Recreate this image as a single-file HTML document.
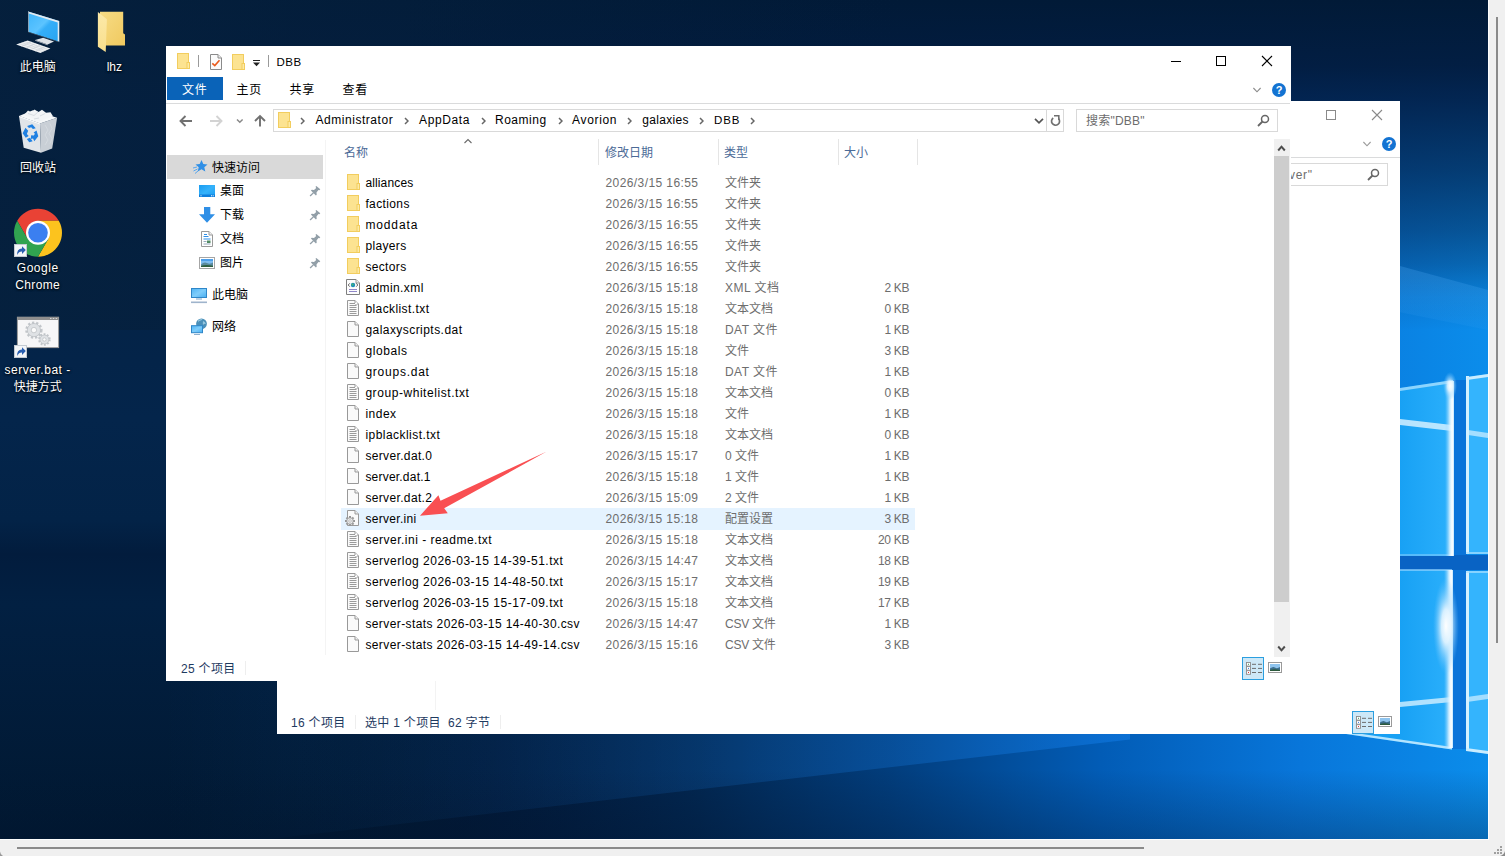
<!DOCTYPE html>
<html lang="zh-CN">
<head>
<meta charset="utf-8">
<title>DBB</title>
<style>
*{box-sizing:border-box;margin:0;padding:0}
html,body{width:1505px;height:856px;overflow:hidden;background:#f0f0f0}
body{font-family:"Liberation Sans","Noto Sans CJK SC",sans-serif;font-size:12px;color:#000;position:relative}
.abs{position:absolute}
#desk{position:absolute;left:0;top:0;width:1488px;height:839px;overflow:hidden;background:#02193a}
#deskedge-r{position:absolute;left:1488px;top:0;width:1px;height:840px;background:#fdfdfd}
#deskedge-b{position:absolute;left:0;top:839px;width:1489px;height:1px;background:#fdfdfd}
.sbv{position:absolute;left:1496px;top:17px;width:2px;height:626px;background:#8a8a8a}
.sbh{position:absolute;left:17px;top:847px;width:1127px;height:2px;background:#8a8a8a}
.dlabel{position:absolute;color:#fff;text-align:center;font-size:12px;line-height:17px;width:90px;text-shadow:0 1px 2px rgba(0,0,0,.9),0 0 3px rgba(0,0,0,.6)}
.win{position:absolute;background:#fff;overflow:hidden}
.t{position:absolute;white-space:nowrap;line-height:16px;height:16px;margin-top:1px}
.row{position:absolute;left:0;height:21px;width:600px}
.g{color:#6d6d6d}
.hd{color:#4b6a97}
</style>
</head>
<body>
<div id="desk">

<svg class="abs" style="left:0;top:0" width="1488" height="839" viewBox="0 0 1488 839">
<defs>
<linearGradient id="wbase" x1="0" y1="0" x2="0" y2="1">
<stop offset="0" stop-color="#041e3c"/><stop offset=".5" stop-color="#04254b"/><stop offset=".62" stop-color="#032347"/><stop offset=".66" stop-color="#021c3d"/><stop offset=".72" stop-color="#022042"/><stop offset="1" stop-color="#011831"/>
</linearGradient>
<linearGradient id="wh" x1="0" y1="0" x2="1488" y2="0" gradientUnits="userSpaceOnUse">
<stop offset="0" stop-color="#02152f" stop-opacity="0"/><stop offset=".2" stop-color="#02152f" stop-opacity="0"/><stop offset=".336" stop-color="#021a3c" stop-opacity=".7"/><stop offset=".47" stop-color="#022751"/><stop offset=".598" stop-color="#023d7c"/><stop offset=".74" stop-color="#025cb6"/><stop offset=".874" stop-color="#0876da"/><stop offset="1" stop-color="#0b8deb"/>
</linearGradient>
<linearGradient id="wtop" x1="0" y1="0" x2="0" y2="330" gradientUnits="userSpaceOnUse">
<stop offset="0" stop-color="#011a37"/><stop offset=".2" stop-color="#021b3e" stop-opacity=".97"/><stop offset=".3" stop-color="#021d45" stop-opacity=".92"/><stop offset=".515" stop-color="#021d45" stop-opacity=".72"/><stop offset=".7" stop-color="#021d45" stop-opacity=".5"/><stop offset=".8" stop-color="#021d45" stop-opacity=".34"/><stop offset=".9" stop-color="#021d45" stop-opacity=".12"/><stop offset="1" stop-color="#021d45" stop-opacity="0"/>
</linearGradient>
<linearGradient id="wtl" x1="0" y1="0" x2="900" y2="0" gradientUnits="userSpaceOnUse"><stop offset="0" stop-color="#05203d" stop-opacity=".9"/><stop offset="1" stop-color="#05203d" stop-opacity="0"/></linearGradient>
<linearGradient id="beam" x1="0" y1="0" x2="-.2" y2="1"><stop offset="0" stop-color="#58b4ff" stop-opacity=".3"/><stop offset="1" stop-color="#58b4ff" stop-opacity="0"/></linearGradient>
<linearGradient id="wedge" x1="160" y1="0" x2="1130" y2="0" gradientUnits="userSpaceOnUse"><stop offset="0" stop-color="#1a8cff" stop-opacity="0"/><stop offset=".35" stop-color="#1a8cff" stop-opacity=".08"/><stop offset=".75" stop-color="#1a8cff" stop-opacity=".22"/><stop offset="1" stop-color="#1a8cff" stop-opacity=".36"/></linearGradient>
<linearGradient id="wbot" x1="0" y1="0" x2="0" y2="1"><stop offset="0" stop-color="#011530" stop-opacity="0"/><stop offset="1" stop-color="#011530" stop-opacity=".3"/></linearGradient>
<linearGradient id="pane" x1="0" y1="0" x2="1" y2="0"><stop offset="0" stop-color="#18a1f4"/><stop offset="1" stop-color="#2bb0fc"/></linearGradient>
<linearGradient id="pane2" x1="1300" y1="0" x2="1452" y2="0" gradientUnits="userSpaceOnUse"><stop offset="0" stop-color="#1299f0"/><stop offset=".66" stop-color="#18a1f4"/><stop offset="1" stop-color="#2bb0fc"/></linearGradient>
<linearGradient id="edge" x1="0" y1="0" x2="1" y2="0"><stop offset="0" stop-color="#8fd4ff" stop-opacity="0"/><stop offset=".55" stop-color="#dff3ff" stop-opacity=".9"/><stop offset=".8" stop-color="#ffffff"/><stop offset="1" stop-color="#bfe6ff"/></linearGradient>
<radialGradient id="glare" cx=".5" cy=".5" r=".5"><stop offset="0" stop-color="#fff"/><stop offset=".35" stop-color="#e8f6ff" stop-opacity=".9"/><stop offset="1" stop-color="#6cc4ff" stop-opacity="0"/></radialGradient>
</defs>
<rect width="1488" height="839" fill="url(#wbase)"/>
<rect width="1488" height="839" fill="url(#wh)"/>
<rect width="1488" height="330" fill="url(#wtop)"/>
<rect width="900" height="330" fill="url(#wtl)"/>
<polygon points="1290,236 1488,290 1488,330 1290,290" fill="url(#beam)"/>
<polygon points="160,839 270,839 1130,739.5 1130,680 160,680" fill="url(#wedge)"/>
<rect x="0" y="770" width="1488" height="69" fill="url(#wbot)"/>
<!-- frame bars -->
<rect x="1452" y="380" width="15" height="369" fill="#0a74d9"/>
<rect x="1400" y="555" width="88" height="15" fill="#0963c4"/>
<!-- panes -->
<polygon points="1400,388 1453,380 1453,556 1400,556" fill="url(#pane)"/>
<polygon points="1300,570 1452,570 1452,749.5 1300,727.3" fill="url(#pane2)"/>
<polygon points="1467,377 1488,374 1488,554 1467,554" fill="#34b4fd"/>
<polygon points="1466,571 1488,571 1488,754 1466,750" fill="#34b4fd"/>
<!-- light beams across panes -->
<polygon points="1400,419 1452,425 1452,431 1400,425" fill="#d4f0ff" opacity=".85"/>
<polygon points="1468,430 1488,433 1488,438 1468,435" fill="#d4f0ff" opacity=".7"/>
<polygon points="1400,702 1452,697 1452,702 1400,707" fill="#d4f0ff" opacity=".8"/>
<polygon points="1467,697 1488,694 1488,699 1467,702" fill="#d4f0ff" opacity=".7"/>
<!-- pane edges -->
<polygon points="1400,388 1453,380 1453,383 1400,391" fill="#a9e0ff" opacity=".8"/>
<polygon points="1300,725 1452,747 1452,749.5 1300,727.3" fill="#b4e4ff"/>
<rect x="1400" y="569" width="52" height="2" fill="#8fd2ff" opacity=".7"/>
<rect x="1400" y="554" width="53" height="2" fill="#8fd2ff" opacity=".5"/>
<rect x="1445" y="381" width="9" height="175" fill="url(#edge)"/>
<rect x="1444" y="570" width="9" height="178" fill="url(#edge)"/>
<rect x="1466" y="376" width="3" height="178" fill="#d6f1ff"/>
<rect x="1466" y="571" width="3" height="180" fill="#d6f1ff"/>
<polygon points="1467,377 1488,374 1488,377 1467,380" fill="#c9ecff"/>
<polygon points="1466,748 1488,751 1488,754 1466,751" fill="#c9ecff"/>
<rect x="1466" y="552" width="22" height="2" fill="#a9e0ff" opacity=".7"/>
<rect x="1466" y="571" width="22" height="2" fill="#a9e0ff" opacity=".7"/>
<ellipse cx="1446" cy="626" rx="13" ry="48" fill="url(#glare)"/>
<ellipse cx="1450" cy="386" rx="7" ry="14" fill="url(#glare)" opacity=".9"/>
</svg>


<!-- This PC -->
<svg class="abs" style="left:10px;top:5px" width="60" height="52" viewBox="10 5 60 52">
<defs><linearGradient id="scr" x1="0" y1="0" x2="1" y2="1"><stop offset="0" stop-color="#3cb4fb"/><stop offset=".45" stop-color="#5cc4ff"/><stop offset=".55" stop-color="#35aef8"/><stop offset="1" stop-color="#28a4f2"/></linearGradient></defs>
<polygon points="35.2,39.9 43.1,37.8 54,41.4 47.6,44.5" fill="#dfe3e8"/>
<polygon points="35.2,39.9 47.6,44.5 47.6,45.3 35.2,40.7" fill="#b4bac2"/>
<polygon points="28.1,11.4 59.2,21.1 59.2,41.7 28.1,31.7" fill="url(#scr)"/>
<polygon points="28.1,11.4 59.2,21.1 59.2,41.7 57.7,41.2 57.7,22.6 28.1,13.3" fill="#e4e9ee"/>
<polygon points="28.1,11.4 28.9,11.6 28.9,32 28.1,31.7" fill="#9aa3ad"/>
<polygon points="28.1,31.7 59.2,41.7 59.2,42.3 28.1,32.3" fill="#55606c"/>
<polygon points="16.1,44.5 27.6,40.5 50.4,48.4 40.4,53" fill="#f0f2f4"/>
<g stroke="#c5cbd2" stroke-width=".6" fill="none"><path d="M18.9 43.5l24.3 8.2M21.8 42.5l23.7 8.1M24.7 41.5l23.2 8"/><path d="M21.5 46.4l9.8-4.6M26 48l9.8-4.6M30.7 49.6l9.6-4.5M35.5 51.3l9.5-4.6"/></g>
</svg>
<div class="dlabel" style="left:-7.3px;top:59px">此电脑</div>
<!-- lhz folder -->
<svg class="abs" style="left:96px;top:10px" width="32" height="44" viewBox="96 10 32 44">
<defs><linearGradient id="fb" x1="0" y1="0" x2="1" y2="1"><stop offset="0" stop-color="#f7dc85"/><stop offset="1" stop-color="#f0c95f"/></linearGradient>
<linearGradient id="ff" x1="0" y1="0" x2="0" y2="1"><stop offset="0" stop-color="#fce9a8"/><stop offset="1" stop-color="#f9df8d"/></linearGradient></defs>
<path d="M100 11.7H123.2V33.3L125 34.5V45.5H100z" fill="url(#fb)"/>
<path d="M97.9 12L106.9 19.3L105.7 52L97.9 46.7z" fill="url(#ff)"/>
</svg>
<div class="dlabel" style="left:69.3px;top:59px">lhz</div>
<!-- Recycle bin -->
<svg class="abs" style="left:15px;top:107px" width="46" height="48" viewBox="15 107 46 48">
<polygon points="19,115.9 40,123.4 41,152.8 23.7,147.7" fill="#e1e5e9"/>
<polygon points="40,123.4 57.1,117.8 52.2,148.6 41,152.8" fill="#c9cfd6"/>
<polygon points="19,115.9 33,110.3 57.1,117.8 40,123.4" fill="#f6f8f9"/>
<path d="M24 115l4-4.5 3.5 2 3-3 4 2.5 3.5-2.2 4 3 4.5-.5 2.5 4-13 5z" fill="#f2f4f6"/>
<path d="M28 113.5l6 2 4-3.5M40 116l5-2.5M34 119l5-1" stroke="#d0d6dc" stroke-width=".8" fill="none"/>
<g fill="none" stroke="#d9dee3" stroke-width=".7"><path d="M45 125l3 5-3 5 3 5-3 5M50 123.5l2 5-3 5 3 5-2 5"/></g>
<polygon points="19,115.9 40,123.4 40.1,124.6 19.1,117.1" fill="#fbfcfd"/>
<g fill="#1f80e2" transform="translate(30.2 133.5) scale(1.350) translate(-29.8 -133)"><path d="M27.5 127.5l3.8-1.3 2.6 3-2.1.4-1.3-1.3-1.6.7z"/><path d="M26.3 128.8l2 2.1-1 2.4 1.4 1.6-2.2 1.3-2.3-3.4z"/><path d="M34.5 130.8l1.3 4.3-3 3.6-.9-2-1.7.3.3-2.7 2 .2 .8-1.4-1-.8z"/><path d="M27.3 137l2.3-.8 2 2.6-2.5.6z"/></g>
</svg>
<div class="dlabel" style="left:-7px;top:160px">回收站</div>
<!-- Chrome -->
<svg class="abs" style="left:12px;top:207px" width="52" height="52" viewBox="0 0 52 52">
<path d="M26.0 25.7L26.00 13.70L46.78 13.70A24.0 24.0 0 0 0 5.22 13.70L15.61 31.70Z" fill="#e94235"/><path d="M26.0 25.7L36.39 31.70L26.00 49.70A24.0 24.0 0 0 0 46.78 13.70L26.00 13.70Z" fill="#fcc31e"/><path d="M26.0 25.7L15.61 31.70L5.22 13.70A24.0 24.0 0 0 0 26.00 49.70L36.39 31.70Z" fill="#31a350"/>
<circle cx="26.0" cy="25.7" r="12" fill="#fff"/><circle cx="26.0" cy="25.7" r="9.8" fill="#3b7ff0"/>
<rect x="2.5" y="37.5" width="12" height="12" fill="#f4f6f8" stroke="#c3cad2" stroke-width="1"/><path d="M5.2 48 q-.6-6.2 4.8-6.4 v-2.4 l3.8 3.9 -3.8 3.9 v-2.4 q-3.2-.1-4.8 3.4z" fill="#2a5fb0"/>
</svg>
<div class="dlabel" style="left:-7.3px;top:260px"><span style="letter-spacing:.52px">Google</span><br><span style="letter-spacing:.38px">Chrome</span></div>
<!-- server.bat -->
<svg class="abs" style="left:12px;top:314px" width="52" height="46" viewBox="12 314 52 46">
<rect x="17.4" y="317.2" width="41.2" height="30.4" fill="#f6f6f7" stroke="#9c9c9c" stroke-width="1"/>
<rect x="17.4" y="317" width="41.2" height="3" fill="#8e8e8e"/>
<g fill="#d8d8d8"><rect x="50" y="318" width="1.5" height="1"/><rect x="52.8" y="318" width="1.5" height="1"/><rect x="55.6" y="318" width="1.5" height="1"/></g>
<g fill="none" stroke="#c2c6ca" stroke-width="2.6" stroke-dasharray="2.2 1.9"><circle cx="33.9" cy="330.1" r="7.4"/></g>
<circle cx="33.9" cy="330.1" r="6.6" fill="#dfe2e5" stroke="#b7bbc0" stroke-width=".7"/><circle cx="33.9" cy="330.1" r="2.7" fill="#fbfbfb" stroke="#b7bbc0" stroke-width=".7"/>
<g fill="none" stroke="#c2c6ca" stroke-width="2.2" stroke-dasharray="1.8 1.5"><circle cx="44.4" cy="339.5" r="5.2"/></g>
<circle cx="44.4" cy="339.5" r="4.5" fill="#dfe2e5" stroke="#b7bbc0" stroke-width=".7"/><circle cx="44.4" cy="339.5" r="1.7" fill="#fbfbfb" stroke="#b7bbc0" stroke-width=".7"/>
<rect x="14.5" y="345.5" width="12" height="12" fill="#f4f6f8" stroke="#c3cad2" stroke-width="1"/><path d="M17.2 356 q-.6-6.2 4.8-6.4 v-2.4 l3.8 3.9 -3.8 3.9 v-2.4 q-3.2-.1-4.8 3.4z" fill="#2a5fb0"/>
</svg>
<div class="dlabel" style="left:-7.3px;top:362px"><span style="letter-spacing:.52px">server.bat -</span><br>快捷方式</div>

<div class="win" id="bw" style="left:277px;top:101px;width:1123px;height:633px">
<svg class="abs" style="left:1048px;top:8px" width="70" height="12" viewBox="0 0 70 12"><rect x="1.5" y="1.5" width="9" height="9" fill="none" stroke="#8a8a8a"/><path d="M47 1l10 10M57 1l-10 10" stroke="#8a8a8a" stroke-width="1.1" fill="none"/></svg>
<svg class="abs" style="left:1086px;top:40px" width="8" height="6" viewBox="0 0 8 6"><path d="M.4 1l3.6 3.8L7.6 1" fill="none" stroke="#9a9a9a" stroke-width="1.1"/></svg>
<div class="abs" style="left:1105px;top:36px;width:14px;height:14px;border-radius:7px;background:#1373d2;color:#fff;font-weight:bold;font-size:11px;line-height:14px;text-align:center">?</div>
<div class="abs" style="left:0;top:56px;width:1123px;height:1px;background:#dadbdc"></div>
<div class="abs" style="left:911px;top:62px;width:200px;height:23px;border:1px solid #d9d9d9;background:#fff"></div>
<div class="t g" style="left:1012px;top:65px;letter-spacing:.7px">ver"</div>
<svg class="abs" style="left:1090px;top:67px" width="13" height="13" viewBox="0 0 13 13"><circle cx="8" cy="5" r="3.5" fill="none" stroke="#666" stroke-width="1.5"/><path d="M5.5 7.5L1 12" stroke="#666" stroke-width="1.8"/></svg>
<div class="t" style="left:14px;top:613px;color:#1e3a5f;letter-spacing:.3px">16 个项目</div>
<div class="t" style="left:88px;top:613px;color:#1e3a5f;letter-spacing:.3px">选中 1 个项目&nbsp; 62 字节</div>
<div class="abs" style="left:78px;top:614px;width:1px;height:14px;background:#eee"></div>
<div class="abs" style="left:223px;top:614px;width:1px;height:14px;background:#eee"></div>
<div class="abs" style="left:158px;top:579px;width:1px;height:30px;background:#f3f3f3"></div>
<div class="abs" style="left:1075px;top:610px;width:22px;height:23px;border:1px solid #2b9fe0;background:#cde8f7"></div><svg class="abs" style="left:1079px;top:615px" width="16" height="13" viewBox="0 0 16 13"><g fill="#fff" stroke="#8a8a8a" stroke-width=".9"><rect x=".5" y=".5" width="4" height="3.6"/><rect x=".5" y="4.6" width="4" height="3.6"/><rect x=".5" y="8.7" width="4" height="3.6"/></g><rect x="2" y="1.8" width="1" height="1" fill="#3a9a5a"/><rect x="2" y="5.9" width="1" height="1" fill="#3a7ae0"/><rect x="2" y="10" width="1" height="1" fill="#e03a3a"/><g fill="#6e6e6e"><rect x="6" y="1.8" width="4" height="1"/><rect x="12" y="1.8" width="4" height="1"/><rect x="6" y="5.9" width="4" height="1"/><rect x="12" y="5.9" width="4" height="1"/><rect x="6" y="10" width="4" height="1"/><rect x="12" y="10" width="4" height="1"/></g></svg><svg class="abs" style="left:1101px;top:615px" width="14" height="11" viewBox="0 0 14 11"><rect x=".5" y=".5" width="13" height="10" fill="#fff" stroke="#9a9a9a"/><rect x="2" y="2" width="10" height="7" fill="#8fc4ee"/><path d="M2 6.5q3-2.5 5-1t5-.5v4H2z" fill="#3d6e8c"/><path d="M2 8q4-1.5 10 0v1H2z" fill="#2c5a3c"/></svg>
</div>
<div class="win" id="fw" style="left:166px;top:46px;width:1125px;height:635px">
<svg class="abs" style="left:11px;top:7px" width="14" height="16" viewBox="0 0 14 16"><rect x=".5" y=".5" width="11" height="15" fill="#fce391" stroke="#f2cd5e"/><rect x="10" y="9.5" width="2.5" height="6" fill="#fdeaa6" stroke="#f2cd5e"/></svg>
<div class="abs" style="left:32px;top:9px;width:1px;height:12px;background:#9a9a9a"></div>
<svg class="abs" style="left:44px;top:8px" width="12" height="16" viewBox="0 0 12 16"><path d="M.5.5h7.5l3.5 3.5v11.5h-11z" fill="#fbfbfb" stroke="#8a8a8a"/><path d="M8 .5v3.5h3.5" fill="#eee" stroke="#8a8a8a"/><path d="M2.3 9.3l2.5 2.3 4.7-5.3" fill="none" stroke="#ea5b1c" stroke-width="1.6"/></svg>
<svg class="abs" style="left:66px;top:8px" width="14" height="16" viewBox="0 0 14 16"><rect x=".5" y=".5" width="11" height="15" fill="#fce391" stroke="#f2cd5e"/><rect x="10" y="9.5" width="2.5" height="6" fill="#fdeaa6" stroke="#f2cd5e"/></svg>
<svg class="abs" style="left:86px;top:14px" width="9" height="8" viewBox="0 0 9 8"><rect x="1" y="0" width="7" height="1" fill="#222"/><path d="M1 2.5h7l-3.5 3.7z" fill="#222"/></svg>
<div class="abs" style="left:102px;top:9px;width:1px;height:12px;background:#9a9a9a"></div>
<div class="t " style="left:110.5px;top:7px;font-size:11.5px;letter-spacing:.55px">DBB</div>
<svg class="abs" style="left:1004px;top:8px" width="110" height="14" viewBox="0 0 110 14"><rect x="1" y="7" width="10" height="1" fill="#000"/><rect x="46.5" y="2.5" width="9" height="9" fill="none" stroke="#000"/><path d="M92 2l10 10M102 2l-10 10" stroke="#000" stroke-width="1.1" fill="none"/></svg>
<div class="abs" style="left:1px;top:31px;width:56px;height:23px;background:#0a63b8"></div>
<div class="t " style="left:16px;top:35px;color:#fff;letter-spacing:.8px">文件</div>
<div class="t " style="left:70.5px;top:35px;letter-spacing:.8px">主页</div>
<div class="t " style="left:123.5px;top:35px;letter-spacing:.8px">共享</div>
<div class="t " style="left:176.5px;top:35px;letter-spacing:.8px">查看</div>
<svg class="abs" style="left:1087px;top:41px" width="8" height="6" viewBox="0 0 8 6"><path d="M.4 1l3.6 3.8L7.6 1" fill="none" stroke="#8a8a8a" stroke-width="1.1"/></svg>
<div class="abs" style="left:1106px;top:37px;width:14px;height:14px;border-radius:7px;background:#1373d2;color:#fff;font-weight:bold;font-size:11px;line-height:14px;text-align:center">?</div>
<div class="abs" style="left:0;top:57px;width:1124px;height:1px;background:#dadbdc"></div>
<svg class="abs" style="left:13px;top:68px" width="100" height="14" viewBox="0 0 100 14"><g fill="none" stroke-width="1.9"><path d="M13 7H2.5M6.5 2L1.5 7l5 5" stroke="#717171"/><path d="M31 7h10.5M37.5 2l5 5-5 5" stroke="#d3d3d3"/><path d="M58 5.5l2.8 2.8 2.8-2.8" stroke="#888" stroke-width="1.5"/><path d="M81 12.5V2.5M76 7l5-5 5 5" stroke="#717171"/></g></svg>
<div class="abs" style="left:107px;top:63px;width:791px;height:23px;border:1px solid #d9d9d9;background:#fff"></div>
<svg class="abs" style="left:112px;top:66px" width="14" height="16" viewBox="0 0 14 16"><rect x=".5" y=".5" width="11" height="15" fill="#fce391" stroke="#f2cd5e"/><rect x="10" y="9.5" width="2.5" height="6" fill="#fdeaa6" stroke="#f2cd5e"/></svg>
<div class="t " style="left:149.5px;top:65px;letter-spacing:.54px;">Administrator</div>
<div class="t " style="left:253px;top:65px;letter-spacing:.63px;">AppData</div>
<div class="t " style="left:329px;top:65px;letter-spacing:.51px;">Roaming</div>
<div class="t " style="left:406px;top:65px;letter-spacing:.67px;">Avorion</div>
<div class="t " style="left:476.3px;top:65px;letter-spacing:.30px;">galaxies</div>
<div class="t " style="left:548px;top:65px;font-size:11.5px;letter-spacing:.9px">DBB</div>
<svg class="abs" style="left:134px;top:71px" width="5" height="8" viewBox="0 0 5 8"><path d="M1 1l3 3-3 3" fill="none" stroke="#666" stroke-width="1.5"/></svg>
<svg class="abs" style="left:237.5px;top:71px" width="5" height="8" viewBox="0 0 5 8"><path d="M1 1l3 3-3 3" fill="none" stroke="#666" stroke-width="1.5"/></svg>
<svg class="abs" style="left:314.5px;top:71px" width="5" height="8" viewBox="0 0 5 8"><path d="M1 1l3 3-3 3" fill="none" stroke="#666" stroke-width="1.5"/></svg>
<svg class="abs" style="left:391.5px;top:71px" width="5" height="8" viewBox="0 0 5 8"><path d="M1 1l3 3-3 3" fill="none" stroke="#666" stroke-width="1.5"/></svg>
<svg class="abs" style="left:461.3px;top:71px" width="5" height="8" viewBox="0 0 5 8"><path d="M1 1l3 3-3 3" fill="none" stroke="#666" stroke-width="1.5"/></svg>
<svg class="abs" style="left:533px;top:71px" width="5" height="8" viewBox="0 0 5 8"><path d="M1 1l3 3-3 3" fill="none" stroke="#666" stroke-width="1.5"/></svg>
<svg class="abs" style="left:583.5px;top:71px" width="5" height="8" viewBox="0 0 5 8"><path d="M1 1l3 3-3 3" fill="none" stroke="#666" stroke-width="1.5"/></svg>
<svg class="abs" style="left:867px;top:71px" width="11" height="8" viewBox="0 0 11 8"><path d="M2 1.8l4 4 4-4" fill="none" stroke="#555" stroke-width="1.7"/></svg>
<div class="abs" style="left:880px;top:64px;width:1px;height:21px;background:#d9d9d9"></div>
<svg class="abs" style="left:883px;top:67px" width="13" height="14" viewBox="0 0 13 14"><path d="M9.7 5.8A4 4 0 1 1 4.2 5" fill="none" stroke="#707070" stroke-width="1.7"/><path d="M5 2.8H9.8V7" fill="none" stroke="#707070" stroke-width="1.6"/></svg>
<div class="abs" style="left:910px;top:63px;width:202px;height:23px;border:1px solid #d9d9d9;background:#fff"></div>
<div class="t g" style="left:920px;top:66px;letter-spacing:.22px;">搜索"DBB"</div>
<svg class="abs" style="left:1091px;top:68px" width="13" height="13" viewBox="0 0 13 13"><circle cx="8" cy="5" r="3.5" fill="none" stroke="#666" stroke-width="1.5"/><path d="M5.5 7.5L1 12" stroke="#666" stroke-width="1.8"/></svg>
<div class="abs" style="left:1px;top:109px;width:156px;height:24px;background:#d9d9d9"></div>
<div class="abs" style="left:159px;top:94px;width:1px;height:515px;background:#f4f4f4"></div>
<svg class="abs" style="left:26px;top:113px" width="16" height="16" viewBox="0 0 16 16"><path d="M9.5 1l1.8 4 4.2.4-3.2 2.9 1 4.3-3.8-2.3-3.8 2.3 1-4.3L3.5 5.4l4.2-.4z" fill="#2f8fe6"/><path d="M1 9l4-1M1.5 12l4-2M3 14.5l3-2.5" stroke="#5aa7ee" stroke-width="1"/></svg>
<div class="t " style="left:46px;top:113px;">快速访问</div>
<div class="t " style="left:54px;top:136px;">桌面</div>
<svg class="abs" style="left:143px;top:139px" width="12" height="12" viewBox="0 0 12 12"><path d="M7.3.9L11.3 4.3 10.4 5.3 9.4 5 7.5 7.4 7.7 9.7 6.9 10.5 1.9 5.4 2.8 4.7 5 5 7.2 3 6.5 1.8Z" fill="#929fa8"/><path d="M4.6 7.6L1.1 11" stroke="#929fa8" stroke-width="1.3"/></svg>
<div class="t " style="left:54px;top:160px;">下载</div>
<svg class="abs" style="left:143px;top:163px" width="12" height="12" viewBox="0 0 12 12"><path d="M7.3.9L11.3 4.3 10.4 5.3 9.4 5 7.5 7.4 7.7 9.7 6.9 10.5 1.9 5.4 2.8 4.7 5 5 7.2 3 6.5 1.8Z" fill="#929fa8"/><path d="M4.6 7.6L1.1 11" stroke="#929fa8" stroke-width="1.3"/></svg>
<div class="t " style="left:54px;top:184px;">文档</div>
<svg class="abs" style="left:143px;top:187px" width="12" height="12" viewBox="0 0 12 12"><path d="M7.3.9L11.3 4.3 10.4 5.3 9.4 5 7.5 7.4 7.7 9.7 6.9 10.5 1.9 5.4 2.8 4.7 5 5 7.2 3 6.5 1.8Z" fill="#929fa8"/><path d="M4.6 7.6L1.1 11" stroke="#929fa8" stroke-width="1.3"/></svg>
<div class="t " style="left:54px;top:208px;">图片</div>
<svg class="abs" style="left:143px;top:211px" width="12" height="12" viewBox="0 0 12 12"><path d="M7.3.9L11.3 4.3 10.4 5.3 9.4 5 7.5 7.4 7.7 9.7 6.9 10.5 1.9 5.4 2.8 4.7 5 5 7.2 3 6.5 1.8Z" fill="#929fa8"/><path d="M4.6 7.6L1.1 11" stroke="#929fa8" stroke-width="1.3"/></svg>
<svg class="abs" style="left:33px;top:139px" width="16" height="12" viewBox="0 0 16 12"><defs><linearGradient id="dk" x1="0" y1="0" x2="1" y2="1"><stop offset="0" stop-color="#1a9cf0"/><stop offset=".5" stop-color="#35b2fb"/><stop offset="1" stop-color="#1a9cf0"/></linearGradient></defs><rect width="16" height="12" fill="url(#dk)"/><rect y="9.5" width="16" height="2.5" fill="#0f7fdc"/><rect x="1.5" y="10.3" width="1" height="1" fill="#fff"/><rect x="12" y="10.3" width="1" height="1" fill="#fff"/><rect x="13.7" y="10.3" width="1" height="1" fill="#fff"/></svg>
<svg class="abs" style="left:33px;top:161px" width="16" height="16" viewBox="0 0 16 16"><path d="M5 0h6.3v7.3h4.7L8 15.7 0 7.3h5z" fill="#2f8fe6"/></svg>
<svg class="abs" style="left:35px;top:185px" width="12" height="16" viewBox="0 0 12 16"><path d="M.5.5h7.5l3.5 3.5v11.5h-11z" fill="#fff" stroke="#999"/><path d="M8 .5v3.5h3.5" fill="#f2f2f2" stroke="#999"/><rect x="3" y="3" width="3" height="1" fill="#2e8fe8"/><rect x="2.5" y="5" width="5" height="1" fill="#2e8fe8"/><rect x="2.5" y="7.5" width="7" height="1" fill="#2e8fe8"/><rect x="2.5" y="10" width="3" height="1" fill="#9ab"/><rect x="6" y="9.5" width="3.5" height="2.5" fill="#4f8a62"/><rect x="2.5" y="12.5" width="7" height="1" fill="#9ab"/></svg>
<svg class="abs" style="left:33px;top:211px" width="16" height="12" viewBox="0 0 16 12"><rect x=".5" y=".5" width="15" height="11" fill="#fff" stroke="#a5a5a5"/><rect x="2" y="2" width="12" height="8" fill="#7fbdf0"/><rect x="2" y="2" width="12" height="2" fill="#4d9ee8"/><path d="M2 7.5q3-3 6-1.5t6-.5v4.5H2z" fill="#5a8a9e"/><path d="M2 9q4-2 12-.3V10H2z" fill="#2f5f3f"/></svg>
<svg class="abs" style="left:24px;top:241px" width="18" height="17" viewBox="0 0 18 17"><defs><linearGradient id="pc" x1="0" y1="0" x2="1" y2="1"><stop offset="0" stop-color="#4fb4f4"/><stop offset=".5" stop-color="#7fcdfb"/><stop offset="1" stop-color="#48aef0"/></linearGradient></defs><rect x="1.5" y="1.5" width="15" height="9" fill="url(#pc)" stroke="#2f86c8"/><rect x="6" y="11.5" width="6" height="1" fill="#7fa6c8"/><rect x="1" y="14.5" width="16" height="1.6" fill="#9fb4cc"/></svg>
<div class="t " style="left:46px;top:240px;">此电脑</div>
<svg class="abs" style="left:24px;top:271px" width="18" height="19" viewBox="0 0 18 19"><circle cx="11.5" cy="6.8" r="5.4" fill="#4b8fb8"/><path d="M8 3.5q2-2 4.5-1.5q-1 1.5-2.5 1.8t-2 1.7z M13 4q2 .5 3 3q-1.5-.5-2.5.5t-.5-3.5z" fill="#a8d4e8" opacity=".8"/><rect x="1.5" y="8.7" width="11" height="7" fill="url(#pc)" stroke="#2f86c8"/><rect x="4" y="17" width="6" height="1" fill="#8fb0cf"/></svg>
<div class="t " style="left:46px;top:272px;">网络</div>
<div class="t hd" style="left:178px;top:98px;">名称</div>
<div class="t hd" style="left:439px;top:98px;">修改日期</div>
<div class="t hd" style="left:558px;top:98px;">类型</div>
<div class="t hd" style="left:678px;top:98px;">大小</div>
<div class="abs" style="left:432px;top:93px;width:1px;height:26px;background:#e5e5e5"></div>
<div class="abs" style="left:552px;top:93px;width:1px;height:26px;background:#e5e5e5"></div>
<div class="abs" style="left:672px;top:93px;width:1px;height:26px;background:#e5e5e5"></div>
<div class="abs" style="left:751px;top:93px;width:1px;height:26px;background:#e5e5e5"></div>
<svg class="abs" style="left:298px;top:92px" width="8" height="6" viewBox="0 0 8 6"><path d="M.5 5L4 1.5 7.5 5" fill="none" stroke="#6a6a6a" stroke-width="1.1"/></svg>
<svg class="abs" style="left:181px;top:128px" width="14" height="16" viewBox="0 0 14 16"><rect x=".5" y=".5" width="11" height="15" fill="#fce391" stroke="#f2cd5e"/><rect x="10" y="9.5" width="2.5" height="6" fill="#fdeaa6" stroke="#f2cd5e"/></svg>
<div class="t " style="left:199.4px;top:128px;letter-spacing:.14px;">alliances</div>
<div class="t g" style="left:439.5px;top:128px;letter-spacing:.41px;">2026/3/15 16:55</div>
<div class="t g" style="left:559px;top:128px;">文件夹</div>
<svg class="abs" style="left:181px;top:149px" width="14" height="16" viewBox="0 0 14 16"><rect x=".5" y=".5" width="11" height="15" fill="#fce391" stroke="#f2cd5e"/><rect x="10" y="9.5" width="2.5" height="6" fill="#fdeaa6" stroke="#f2cd5e"/></svg>
<div class="t " style="left:199.4px;top:149px;letter-spacing:.38px;">factions</div>
<div class="t g" style="left:439.5px;top:149px;letter-spacing:.41px;">2026/3/15 16:55</div>
<div class="t g" style="left:559px;top:149px;">文件夹</div>
<svg class="abs" style="left:181px;top:170px" width="14" height="16" viewBox="0 0 14 16"><rect x=".5" y=".5" width="11" height="15" fill="#fce391" stroke="#f2cd5e"/><rect x="10" y="9.5" width="2.5" height="6" fill="#fdeaa6" stroke="#f2cd5e"/></svg>
<div class="t " style="left:199.4px;top:170px;letter-spacing:.87px;">moddata</div>
<div class="t g" style="left:439.5px;top:170px;letter-spacing:.41px;">2026/3/15 16:55</div>
<div class="t g" style="left:559px;top:170px;">文件夹</div>
<svg class="abs" style="left:181px;top:191px" width="14" height="16" viewBox="0 0 14 16"><rect x=".5" y=".5" width="11" height="15" fill="#fce391" stroke="#f2cd5e"/><rect x="10" y="9.5" width="2.5" height="6" fill="#fdeaa6" stroke="#f2cd5e"/></svg>
<div class="t " style="left:199.4px;top:191px;letter-spacing:.35px;">players</div>
<div class="t g" style="left:439.5px;top:191px;letter-spacing:.41px;">2026/3/15 16:55</div>
<div class="t g" style="left:559px;top:191px;">文件夹</div>
<svg class="abs" style="left:181px;top:212px" width="14" height="16" viewBox="0 0 14 16"><rect x=".5" y=".5" width="11" height="15" fill="#fce391" stroke="#f2cd5e"/><rect x="10" y="9.5" width="2.5" height="6" fill="#fdeaa6" stroke="#f2cd5e"/></svg>
<div class="t " style="left:199.4px;top:212px;letter-spacing:.35px;">sectors</div>
<div class="t g" style="left:439.5px;top:212px;letter-spacing:.41px;">2026/3/15 16:55</div>
<div class="t g" style="left:559px;top:212px;">文件夹</div>
<svg class="abs" style="left:180px;top:233px" width="14" height="16" viewBox="0 0 14 16"><path d="M.5.5h9.5l3.5 3.5v11.5h-13z" fill="#fcfcfc" stroke="#7f7f7f"/><path d="M10 .5v3.5h3.5" fill="#eee" stroke="#999"/><circle cx="7" cy="6" r="2.2" fill="#1d8fb8"/><circle cx="6.6" cy="5.6" r="1" fill="#49b86a"/><path d="M3.8 4.3L2.2 6l1.6 1.7M10.2 4.3L11.8 6l-1.6 1.7" fill="none" stroke="#555" stroke-width=".9"/><rect x="3" y="10" width="8" height="1" fill="#8f86c8"/><rect x="3" y="12" width="8" height="1" fill="#8f86c8"/></svg>
<div class="t " style="left:199.4px;top:233px;letter-spacing:.41px;">admin.xml</div>
<div class="t g" style="left:439.5px;top:233px;letter-spacing:.41px;">2026/3/15 15:18</div>
<div class="t g" style="left:559px;top:233px;letter-spacing:.48px;">XML 文档</div>
<div class="t g" style="left:683.5px;width:60px;text-align:right;top:233px;letter-spacing:-.3px;margin-left:-.3px">2 KB</div>
<svg class="abs" style="left:181px;top:254px" width="12" height="16" viewBox="0 0 12 16"><path d="M.5.5h7.5l3.5 3.5v11.5h-11z" fill="#fafafa" stroke="#999"/><path d="M8 .5v3.5h3.5" fill="#f0f0f0" stroke="#999"/><rect x="2.5" y="3" width="7" height="1" fill="#9a9a9a"/><rect x="2.5" y="5" width="7" height="1" fill="#9a9a9a"/><rect x="2.5" y="7" width="7" height="1" fill="#9a9a9a"/><rect x="2.5" y="9" width="7" height="1" fill="#9a9a9a"/><rect x="2.5" y="11" width="7" height="1" fill="#9a9a9a"/><rect x="2.5" y="13" width="7" height="1" fill="#9a9a9a"/><rect x="8" y="3" width="2" height="1" fill="#fff"/></svg>
<div class="t " style="left:199.4px;top:254px;letter-spacing:.41px;">blacklist.txt</div>
<div class="t g" style="left:439.5px;top:254px;letter-spacing:.41px;">2026/3/15 15:18</div>
<div class="t g" style="left:559px;top:254px;">文本文档</div>
<div class="t g" style="left:683.5px;width:60px;text-align:right;top:254px;letter-spacing:-.3px;margin-left:-.3px">0 KB</div>
<svg class="abs" style="left:181px;top:275px" width="12" height="16" viewBox="0 0 12 16"><path d="M.5.5h7.5l3.5 3.5v11.5h-11z" fill="#fafafa" stroke="#999"/><path d="M8 .5v3.5h3.5" fill="#f0f0f0" stroke="#999"/></svg>
<div class="t " style="left:199.4px;top:275px;letter-spacing:.45px;">galaxyscripts.dat</div>
<div class="t g" style="left:439.5px;top:275px;letter-spacing:.41px;">2026/3/15 15:18</div>
<div class="t g" style="left:559px;top:275px;letter-spacing:.45px;">DAT 文件</div>
<div class="t g" style="left:683.5px;width:60px;text-align:right;top:275px;letter-spacing:-.3px;margin-left:-.3px">1 KB</div>
<svg class="abs" style="left:181px;top:296px" width="12" height="16" viewBox="0 0 12 16"><path d="M.5.5h7.5l3.5 3.5v11.5h-11z" fill="#fafafa" stroke="#999"/><path d="M8 .5v3.5h3.5" fill="#f0f0f0" stroke="#999"/></svg>
<div class="t " style="left:199.4px;top:296px;letter-spacing:.61px;">globals</div>
<div class="t g" style="left:439.5px;top:296px;letter-spacing:.41px;">2026/3/15 15:18</div>
<div class="t g" style="left:559px;top:296px;">文件</div>
<div class="t g" style="left:683.5px;width:60px;text-align:right;top:296px;letter-spacing:-.3px;margin-left:-.3px">3 KB</div>
<svg class="abs" style="left:181px;top:317px" width="12" height="16" viewBox="0 0 12 16"><path d="M.5.5h7.5l3.5 3.5v11.5h-11z" fill="#fafafa" stroke="#999"/><path d="M8 .5v3.5h3.5" fill="#f0f0f0" stroke="#999"/></svg>
<div class="t " style="left:199.4px;top:317px;letter-spacing:.76px;">groups.dat</div>
<div class="t g" style="left:439.5px;top:317px;letter-spacing:.41px;">2026/3/15 15:18</div>
<div class="t g" style="left:559px;top:317px;letter-spacing:.45px;">DAT 文件</div>
<div class="t g" style="left:683.5px;width:60px;text-align:right;top:317px;letter-spacing:-.3px;margin-left:-.3px">1 KB</div>
<svg class="abs" style="left:181px;top:338px" width="12" height="16" viewBox="0 0 12 16"><path d="M.5.5h7.5l3.5 3.5v11.5h-11z" fill="#fafafa" stroke="#999"/><path d="M8 .5v3.5h3.5" fill="#f0f0f0" stroke="#999"/><rect x="2.5" y="3" width="7" height="1" fill="#9a9a9a"/><rect x="2.5" y="5" width="7" height="1" fill="#9a9a9a"/><rect x="2.5" y="7" width="7" height="1" fill="#9a9a9a"/><rect x="2.5" y="9" width="7" height="1" fill="#9a9a9a"/><rect x="2.5" y="11" width="7" height="1" fill="#9a9a9a"/><rect x="2.5" y="13" width="7" height="1" fill="#9a9a9a"/><rect x="8" y="3" width="2" height="1" fill="#fff"/></svg>
<div class="t " style="left:199.4px;top:338px;letter-spacing:.56px;">group-whitelist.txt</div>
<div class="t g" style="left:439.5px;top:338px;letter-spacing:.41px;">2026/3/15 15:18</div>
<div class="t g" style="left:559px;top:338px;">文本文档</div>
<div class="t g" style="left:683.5px;width:60px;text-align:right;top:338px;letter-spacing:-.3px;margin-left:-.3px">0 KB</div>
<svg class="abs" style="left:181px;top:359px" width="12" height="16" viewBox="0 0 12 16"><path d="M.5.5h7.5l3.5 3.5v11.5h-11z" fill="#fafafa" stroke="#999"/><path d="M8 .5v3.5h3.5" fill="#f0f0f0" stroke="#999"/></svg>
<div class="t " style="left:199.4px;top:359px;letter-spacing:.50px;">index</div>
<div class="t g" style="left:439.5px;top:359px;letter-spacing:.41px;">2026/3/15 15:18</div>
<div class="t g" style="left:559px;top:359px;">文件</div>
<div class="t g" style="left:683.5px;width:60px;text-align:right;top:359px;letter-spacing:-.3px;margin-left:-.3px">1 KB</div>
<svg class="abs" style="left:181px;top:380px" width="12" height="16" viewBox="0 0 12 16"><path d="M.5.5h7.5l3.5 3.5v11.5h-11z" fill="#fafafa" stroke="#999"/><path d="M8 .5v3.5h3.5" fill="#f0f0f0" stroke="#999"/><rect x="2.5" y="3" width="7" height="1" fill="#9a9a9a"/><rect x="2.5" y="5" width="7" height="1" fill="#9a9a9a"/><rect x="2.5" y="7" width="7" height="1" fill="#9a9a9a"/><rect x="2.5" y="9" width="7" height="1" fill="#9a9a9a"/><rect x="2.5" y="11" width="7" height="1" fill="#9a9a9a"/><rect x="2.5" y="13" width="7" height="1" fill="#9a9a9a"/><rect x="8" y="3" width="2" height="1" fill="#fff"/></svg>
<div class="t " style="left:199.4px;top:380px;letter-spacing:.46px;">ipblacklist.txt</div>
<div class="t g" style="left:439.5px;top:380px;letter-spacing:.41px;">2026/3/15 15:18</div>
<div class="t g" style="left:559px;top:380px;">文本文档</div>
<div class="t g" style="left:683.5px;width:60px;text-align:right;top:380px;letter-spacing:-.3px;margin-left:-.3px">0 KB</div>
<svg class="abs" style="left:181px;top:401px" width="12" height="16" viewBox="0 0 12 16"><path d="M.5.5h7.5l3.5 3.5v11.5h-11z" fill="#fafafa" stroke="#999"/><path d="M8 .5v3.5h3.5" fill="#f0f0f0" stroke="#999"/></svg>
<div class="t " style="left:199.4px;top:401px;letter-spacing:.35px;">server.dat.0</div>
<div class="t g" style="left:439.5px;top:401px;letter-spacing:.41px;">2026/3/15 15:17</div>
<div class="t g" style="left:559px;top:401px;">0 文件</div>
<div class="t g" style="left:683.5px;width:60px;text-align:right;top:401px;letter-spacing:-.3px;margin-left:-.3px">1 KB</div>
<svg class="abs" style="left:181px;top:422px" width="12" height="16" viewBox="0 0 12 16"><path d="M.5.5h7.5l3.5 3.5v11.5h-11z" fill="#fafafa" stroke="#999"/><path d="M8 .5v3.5h3.5" fill="#f0f0f0" stroke="#999"/></svg>
<div class="t " style="left:199.4px;top:422px;letter-spacing:.21px;">server.dat.1</div>
<div class="t g" style="left:439.5px;top:422px;letter-spacing:.41px;">2026/3/15 15:18</div>
<div class="t g" style="left:559px;top:422px;">1 文件</div>
<div class="t g" style="left:683.5px;width:60px;text-align:right;top:422px;letter-spacing:-.3px;margin-left:-.3px">1 KB</div>
<svg class="abs" style="left:181px;top:443px" width="12" height="16" viewBox="0 0 12 16"><path d="M.5.5h7.5l3.5 3.5v11.5h-11z" fill="#fafafa" stroke="#999"/><path d="M8 .5v3.5h3.5" fill="#f0f0f0" stroke="#999"/></svg>
<div class="t " style="left:199.4px;top:443px;letter-spacing:.35px;">server.dat.2</div>
<div class="t g" style="left:439.5px;top:443px;letter-spacing:.41px;">2026/3/15 15:09</div>
<div class="t g" style="left:559px;top:443px;">2 文件</div>
<div class="t g" style="left:683.5px;width:60px;text-align:right;top:443px;letter-spacing:-.3px;margin-left:-.3px">1 KB</div>
<div class="abs" style="left:175px;top:462px;width:574px;height:22px;background:#e5f3ff"></div>
<svg class="abs" style="left:179px;top:464px" width="14" height="16" viewBox="0 0 14 16"><path d="M2.5.5h7.5l3.5 3.5v11.5h-11z" fill="#fafafa" stroke="#999"/><path d="M10 .5v3.5h3.5" fill="#f0f0f0" stroke="#999"/><rect x="-1" y="-5" width="2" height="2.2" fill="#959595" transform="translate(5 11) rotate(0)"/><rect x="-1" y="-5" width="2" height="2.2" fill="#959595" transform="translate(5 11) rotate(45)"/><rect x="-1" y="-5" width="2" height="2.2" fill="#959595" transform="translate(5 11) rotate(90)"/><rect x="-1" y="-5" width="2" height="2.2" fill="#959595" transform="translate(5 11) rotate(135)"/><rect x="-1" y="-5" width="2" height="2.2" fill="#959595" transform="translate(5 11) rotate(180)"/><rect x="-1" y="-5" width="2" height="2.2" fill="#959595" transform="translate(5 11) rotate(225)"/><rect x="-1" y="-5" width="2" height="2.2" fill="#959595" transform="translate(5 11) rotate(270)"/><rect x="-1" y="-5" width="2" height="2.2" fill="#959595" transform="translate(5 11) rotate(315)"/><circle cx="5" cy="11" r="3.3" fill="#ededed" stroke="#959595" stroke-width=".9"/><circle cx="5" cy="11" r="1.3" fill="#fff" stroke="#9a9a9a" stroke-width=".6"/></svg>
<div class="t " style="left:199.4px;top:464px;letter-spacing:.31px;">server.ini</div>
<div class="t g" style="left:439.5px;top:464px;letter-spacing:.41px;">2026/3/15 15:18</div>
<div class="t g" style="left:559px;top:464px;">配置设置</div>
<div class="t g" style="left:683.5px;width:60px;text-align:right;top:464px;letter-spacing:-.3px;margin-left:-.3px">3 KB</div>
<svg class="abs" style="left:181px;top:485px" width="12" height="16" viewBox="0 0 12 16"><path d="M.5.5h7.5l3.5 3.5v11.5h-11z" fill="#fafafa" stroke="#999"/><path d="M8 .5v3.5h3.5" fill="#f0f0f0" stroke="#999"/><rect x="2.5" y="3" width="7" height="1" fill="#9a9a9a"/><rect x="2.5" y="5" width="7" height="1" fill="#9a9a9a"/><rect x="2.5" y="7" width="7" height="1" fill="#9a9a9a"/><rect x="2.5" y="9" width="7" height="1" fill="#9a9a9a"/><rect x="2.5" y="11" width="7" height="1" fill="#9a9a9a"/><rect x="2.5" y="13" width="7" height="1" fill="#9a9a9a"/><rect x="8" y="3" width="2" height="1" fill="#fff"/></svg>
<div class="t " style="left:199.4px;top:485px;letter-spacing:.49px;">server.ini - readme.txt</div>
<div class="t g" style="left:439.5px;top:485px;letter-spacing:.41px;">2026/3/15 15:18</div>
<div class="t g" style="left:559px;top:485px;">文本文档</div>
<div class="t g" style="left:683.5px;width:60px;text-align:right;top:485px;letter-spacing:-.3px;margin-left:-.3px">20 KB</div>
<svg class="abs" style="left:181px;top:506px" width="12" height="16" viewBox="0 0 12 16"><path d="M.5.5h7.5l3.5 3.5v11.5h-11z" fill="#fafafa" stroke="#999"/><path d="M8 .5v3.5h3.5" fill="#f0f0f0" stroke="#999"/><rect x="2.5" y="3" width="7" height="1" fill="#9a9a9a"/><rect x="2.5" y="5" width="7" height="1" fill="#9a9a9a"/><rect x="2.5" y="7" width="7" height="1" fill="#9a9a9a"/><rect x="2.5" y="9" width="7" height="1" fill="#9a9a9a"/><rect x="2.5" y="11" width="7" height="1" fill="#9a9a9a"/><rect x="2.5" y="13" width="7" height="1" fill="#9a9a9a"/><rect x="8" y="3" width="2" height="1" fill="#fff"/></svg>
<div class="t " style="left:199.4px;top:506px;letter-spacing:.50px;">serverlog 2026-03-15 14-39-51.txt</div>
<div class="t g" style="left:439.5px;top:506px;letter-spacing:.41px;">2026/3/15 14:47</div>
<div class="t g" style="left:559px;top:506px;">文本文档</div>
<div class="t g" style="left:683.5px;width:60px;text-align:right;top:506px;letter-spacing:-.3px;margin-left:-.3px">18 KB</div>
<svg class="abs" style="left:181px;top:527px" width="12" height="16" viewBox="0 0 12 16"><path d="M.5.5h7.5l3.5 3.5v11.5h-11z" fill="#fafafa" stroke="#999"/><path d="M8 .5v3.5h3.5" fill="#f0f0f0" stroke="#999"/><rect x="2.5" y="3" width="7" height="1" fill="#9a9a9a"/><rect x="2.5" y="5" width="7" height="1" fill="#9a9a9a"/><rect x="2.5" y="7" width="7" height="1" fill="#9a9a9a"/><rect x="2.5" y="9" width="7" height="1" fill="#9a9a9a"/><rect x="2.5" y="11" width="7" height="1" fill="#9a9a9a"/><rect x="2.5" y="13" width="7" height="1" fill="#9a9a9a"/><rect x="8" y="3" width="2" height="1" fill="#fff"/></svg>
<div class="t " style="left:199.4px;top:527px;letter-spacing:.50px;">serverlog 2026-03-15 14-48-50.txt</div>
<div class="t g" style="left:439.5px;top:527px;letter-spacing:.41px;">2026/3/15 15:17</div>
<div class="t g" style="left:559px;top:527px;">文本文档</div>
<div class="t g" style="left:683.5px;width:60px;text-align:right;top:527px;letter-spacing:-.3px;margin-left:-.3px">19 KB</div>
<svg class="abs" style="left:181px;top:548px" width="12" height="16" viewBox="0 0 12 16"><path d="M.5.5h7.5l3.5 3.5v11.5h-11z" fill="#fafafa" stroke="#999"/><path d="M8 .5v3.5h3.5" fill="#f0f0f0" stroke="#999"/><rect x="2.5" y="3" width="7" height="1" fill="#9a9a9a"/><rect x="2.5" y="5" width="7" height="1" fill="#9a9a9a"/><rect x="2.5" y="7" width="7" height="1" fill="#9a9a9a"/><rect x="2.5" y="9" width="7" height="1" fill="#9a9a9a"/><rect x="2.5" y="11" width="7" height="1" fill="#9a9a9a"/><rect x="2.5" y="13" width="7" height="1" fill="#9a9a9a"/><rect x="8" y="3" width="2" height="1" fill="#fff"/></svg>
<div class="t " style="left:199.4px;top:548px;letter-spacing:.50px;">serverlog 2026-03-15 15-17-09.txt</div>
<div class="t g" style="left:439.5px;top:548px;letter-spacing:.41px;">2026/3/15 15:18</div>
<div class="t g" style="left:559px;top:548px;">文本文档</div>
<div class="t g" style="left:683.5px;width:60px;text-align:right;top:548px;letter-spacing:-.3px;margin-left:-.3px">17 KB</div>
<svg class="abs" style="left:181px;top:569px" width="12" height="16" viewBox="0 0 12 16"><path d="M.5.5h7.5l3.5 3.5v11.5h-11z" fill="#fafafa" stroke="#999"/><path d="M8 .5v3.5h3.5" fill="#f0f0f0" stroke="#999"/></svg>
<div class="t " style="left:199.4px;top:569px;letter-spacing:.40px;">server-stats 2026-03-15 14-40-30.csv</div>
<div class="t g" style="left:439.5px;top:569px;letter-spacing:.41px;">2026/3/15 14:47</div>
<div class="t g" style="left:559px;top:569px;letter-spacing:-.24px;">CSV 文件</div>
<div class="t g" style="left:683.5px;width:60px;text-align:right;top:569px;letter-spacing:-.3px;margin-left:-.3px">1 KB</div>
<svg class="abs" style="left:181px;top:590px" width="12" height="16" viewBox="0 0 12 16"><path d="M.5.5h7.5l3.5 3.5v11.5h-11z" fill="#fafafa" stroke="#999"/><path d="M8 .5v3.5h3.5" fill="#f0f0f0" stroke="#999"/></svg>
<div class="t " style="left:199.4px;top:590px;letter-spacing:.40px;">server-stats 2026-03-15 14-49-14.csv</div>
<div class="t g" style="left:439.5px;top:590px;letter-spacing:.41px;">2026/3/15 15:16</div>
<div class="t g" style="left:559px;top:590px;letter-spacing:-.24px;">CSV 文件</div>
<div class="t g" style="left:683.5px;width:60px;text-align:right;top:590px;letter-spacing:-.3px;margin-left:-.3px">3 KB</div>
<div class="abs" style="left:1108px;top:93px;width:16px;height:518px;background:#f0f0f0"></div>
<div class="abs" style="left:1108px;top:110px;width:15px;height:446px;background:#cdcdcd"></div>
<svg class="abs" style="left:1111px;top:98px" width="9" height="8" viewBox="0 0 9 8"><path d="M1.2 6.5l3.3-3.8 3.3 3.8" fill="none" stroke="#4d4d4d" stroke-width="2"/></svg>
<svg class="abs" style="left:1111px;top:599px" width="9" height="8" viewBox="0 0 9 8"><path d="M1.2 1.5l3.3 3.8 3.3-3.8" fill="none" stroke="#4d4d4d" stroke-width="2"/></svg>
<div class="t " style="left:15px;top:614px;color:#1e3a5f;letter-spacing:.3px">25 个项目</div>
<div class="abs" style="left:79px;top:615px;width:1px;height:14px;background:#eee"></div>
<div class="abs" style="left:1076px;top:611px;width:22px;height:23px;border:1px solid #2b9fe0;background:#cde8f7"></div><svg class="abs" style="left:1080px;top:616px" width="16" height="13" viewBox="0 0 16 13"><g fill="#fff" stroke="#8a8a8a" stroke-width=".9"><rect x=".5" y=".5" width="4" height="3.6"/><rect x=".5" y="4.6" width="4" height="3.6"/><rect x=".5" y="8.7" width="4" height="3.6"/></g><rect x="2" y="1.8" width="1" height="1" fill="#3a9a5a"/><rect x="2" y="5.9" width="1" height="1" fill="#3a7ae0"/><rect x="2" y="10" width="1" height="1" fill="#e03a3a"/><g fill="#6e6e6e"><rect x="6" y="1.8" width="4" height="1"/><rect x="12" y="1.8" width="4" height="1"/><rect x="6" y="5.9" width="4" height="1"/><rect x="12" y="5.9" width="4" height="1"/><rect x="6" y="10" width="4" height="1"/><rect x="12" y="10" width="4" height="1"/></g></svg><svg class="abs" style="left:1102px;top:616px" width="14" height="11" viewBox="0 0 14 11"><rect x=".5" y=".5" width="13" height="10" fill="#fff" stroke="#9a9a9a"/><rect x="2" y="2" width="10" height="7" fill="#8fc4ee"/><path d="M2 6.5q3-2.5 5-1t5-.5v4H2z" fill="#3d6e8c"/><path d="M2 8q4-1.5 10 0v1H2z" fill="#2c5a3c"/></svg>
</div>
<svg class="abs" style="left:410px;top:440px" width="150" height="90" viewBox="410 440 150 90">
<path d="M546.7 451.6 L440.5 500.8 L438.4 495.2 L420 515.7 L447.8 513.3 L444.2 508.3 Z" fill="#f94f52"/>
</svg>
</div>
<div id="deskedge-r"></div><div id="deskedge-b"></div>
<div class="sbv"></div><div class="sbh"></div>
<svg class="abs" style="left:1493px;top:845px" width="12" height="11" viewBox="0 0 12 11"><g fill="#a0a0a0"><rect x="7" y="1" width="2" height="2"/><rect x="4" y="4" width="2" height="2"/><rect x="7" y="4" width="2" height="2"/><rect x="1" y="7" width="2" height="2"/><rect x="4" y="7" width="2" height="2"/><rect x="7" y="7" width="2" height="2"/></g><path d="M12 6q-1 4-5 5h5z" fill="#8a8a8a"/></svg><svg class="abs" style="left:0;top:840px" width="6" height="16" viewBox="0 0 6 16"><path d="M0 11.5q.5 3.5 3 4.5H0z" fill="#9a9a9a"/></svg>
</body>
</html>
